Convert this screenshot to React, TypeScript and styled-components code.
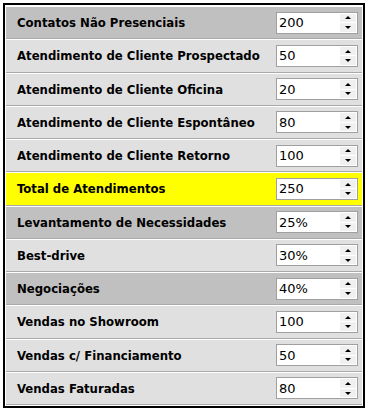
import React from 'react'
import styled, { createGlobalStyle } from 'styled-components'

const GlobalStyle = createGlobalStyle`
  html, body {
    margin: 0;
    padding: 0;
    background: #ffffff;
  }
`

const Panel = styled.div`
  margin: 3px 0 0 3px;
  width: 356px;
  border: 2px solid #000000;
  padding: 1px;
  background: #ffffff;
  font-family: Tahoma, "DejaVu Sans Condensed", "DejaVu Sans", Verdana, sans-serif;
`

const Row = styled.div<{ $tone: 'dark' | 'light' | 'highlight' }>`
  display: flex;
  align-items: center;
  justify-content: space-between;
  height: 31.25px;
  padding: 0 4px 0 11px;
  border-top: 1px solid #ffffff;
  border-bottom: 1px solid #a9a9a9;
  background: ${p =>
    p.$tone === 'dark' ? '#c0c0c0' : p.$tone === 'highlight' ? '#ffff00' : '#e0e0e0'};
`

const Label = styled.span`
  font-size: 13px;
  font-weight: bold;
  color: #000000;
  white-space: nowrap;
`

const SpinBox = styled.div`
  display: flex;
  align-items: stretch;
  width: 80px;
  height: 20px;
  border: 1px solid #a0a0a0;
  background: #ffffff;
`

const SpinValue = styled.span`
  flex: 1;
  display: flex;
  align-items: center;
  padding-left: 2px;
  font-family: "DejaVu Sans", sans-serif;
  font-size: 13px;
  color: #000000;
`

const SpinButtons = styled.div`
  display: flex;
  flex-direction: column;
  width: 16px;
  padding: 1px 1px 1px 0;
  gap: 1px;
`

const SpinButton = styled.div<{ $dir: 'up' | 'down' }>`
  flex: 1;
  background: #f0f0f0;
  display: flex;
  align-items: center;
  justify-content: center;

  &::after {
    content: '';
    width: 0;
    height: 0;
    border-left: 3px solid transparent;
    border-right: 3px solid transparent;
    ${p =>
      p.$dir === 'up'
        ? 'border-bottom: 3px solid #000000;'
        : 'border-top: 3px solid #000000;'}
  }
`

type Item = { label: string; value: string; tone: 'dark' | 'light' | 'highlight' }

const items: Item[] = [
  { label: 'Contatos Não Presenciais', value: '200', tone: 'dark' },
  { label: 'Atendimento de Cliente Prospectado', value: '50', tone: 'light' },
  { label: 'Atendimento de Cliente Oficina', value: '20', tone: 'light' },
  { label: 'Atendimento de Cliente Espontâneo', value: '80', tone: 'light' },
  { label: 'Atendimento de Cliente Retorno', value: '100', tone: 'light' },
  { label: 'Total de Atendimentos', value: '250', tone: 'highlight' },
  { label: 'Levantamento de Necessidades', value: '25%', tone: 'dark' },
  { label: 'Best-drive', value: '30%', tone: 'light' },
  { label: 'Negociações', value: '40%', tone: 'dark' },
  { label: 'Vendas no Showroom', value: '100', tone: 'light' },
  { label: 'Vendas c/ Financiamento', value: '50', tone: 'light' },
  { label: 'Vendas Faturadas', value: '80', tone: 'light' },
]

const NumberField = ({ value }: { value: string }) => (
  <SpinBox>
    <SpinValue>{value}</SpinValue>
    <SpinButtons>
      <SpinButton $dir="up" />
      <SpinButton $dir="down" />
    </SpinButtons>
  </SpinBox>
)

export default function App() {
  return (
    <>
      <GlobalStyle />
      <Panel>
        {items.map(item => (
          <Row key={item.label} $tone={item.tone}>
            <Label>{item.label}</Label>
            <NumberField value={item.value} />
          </Row>
        ))}
      </Panel>
    </>
  )
}
